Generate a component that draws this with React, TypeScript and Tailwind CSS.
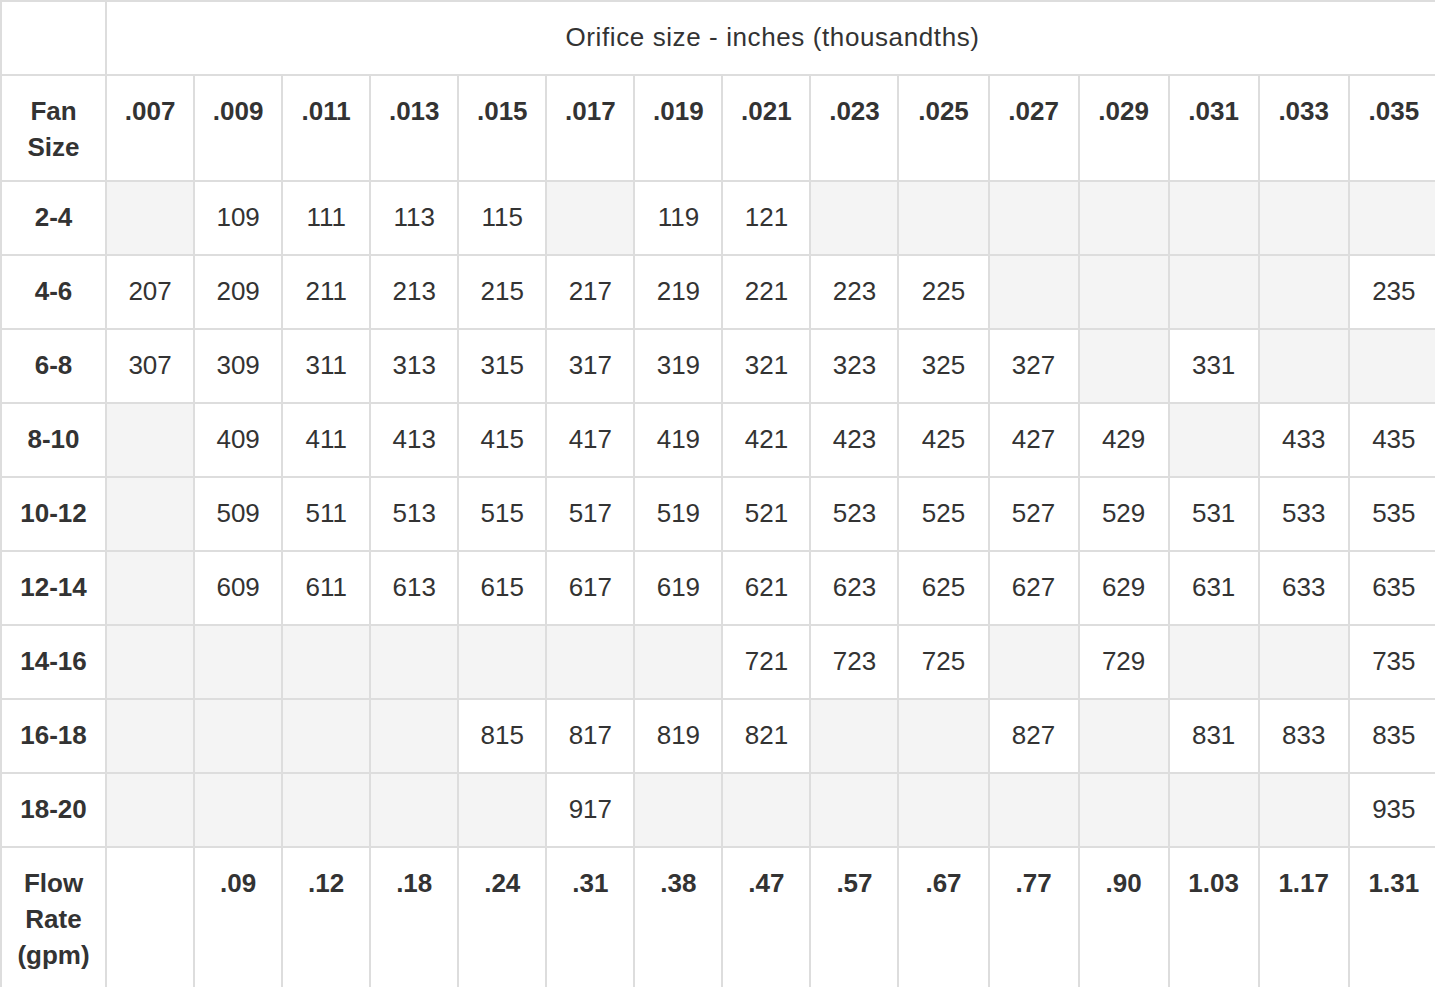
import React from "react";

const sizes = [".007", ".009", ".011", ".013", ".015", ".017", ".019", ".021", ".023", ".025", ".027", ".029", ".031", ".033", ".035"];

const colWidths = [105, 88, 88, 88, 88, 88, 88, 88, 88, 88, 90, 90, 90, 90, 90, 90];

// empty string = no tip for that fan size / orifice
const rows: { label: string; cells: string[] }[] = [
  { label: "2-4", cells: ["", "109", "111", "113", "115", "", "119", "121", "", "", "", "", "", "", ""] },
  { label: "4-6", cells: ["207", "209", "211", "213", "215", "217", "219", "221", "223", "225", "", "", "", "", "235"] },
  { label: "6-8", cells: ["307", "309", "311", "313", "315", "317", "319", "321", "323", "325", "327", "", "331", "", ""] },
  { label: "8-10", cells: ["", "409", "411", "413", "415", "417", "419", "421", "423", "425", "427", "429", "", "433", "435"] },
  { label: "10-12", cells: ["", "509", "511", "513", "515", "517", "519", "521", "523", "525", "527", "529", "531", "533", "535"] },
  { label: "12-14", cells: ["", "609", "611", "613", "615", "617", "619", "621", "623", "625", "627", "629", "631", "633", "635"] },
  { label: "14-16", cells: ["", "", "", "", "", "", "", "721", "723", "725", "", "729", "", "", "735"] },
  { label: "16-18", cells: ["", "", "", "", "815", "817", "819", "821", "", "", "827", "", "831", "833", "835"] },
  { label: "18-20", cells: ["", "", "", "", "", "917", "", "", "", "", "", "", "", "", "935"] },
];

const flowRates = ["", ".09", ".12", ".18", ".24", ".31", ".38", ".47", ".57", ".67", ".77", ".90", "1.03", "1.17", "1.31"];

const cell = "border-2 border-[#dddddd] text-center align-top px-0 pt-[17px]";

const App = () => {
  return (
    <div className="w-full min-h-screen overflow-hidden bg-white">
      <table
        className="table-fixed border-collapse text-[26px] leading-[36px] text-[#333333]"
        style={{ width: 1440, fontFamily: '"Liberation Sans", Arial, Helvetica, sans-serif' }}
      >
        <colgroup>
          {colWidths.map((w, i) => (
            <col key={i} style={{ width: w }} />
          ))}
        </colgroup>
        <tbody>
          <tr>
            <td className={`${cell} pb-[19px]`}></td>
            <td className={`${cell} pb-[19px] tracking-[0.6px]`} colSpan={15}>
              Orifice size - inches (thousandths)
            </td>
          </tr>
          <tr>
            <th className={`${cell} pb-[15px] font-bold`}>
              Fan
              <br />
              Size
            </th>
            {sizes.map((s) => (
              <th key={s} className={`${cell} pb-[15px] font-bold`}>
                {s}
              </th>
            ))}
          </tr>
          {rows.map((row) => (
            <tr key={row.label}>
              <th className={`${cell} pb-[19px] font-bold`}>{row.label}</th>
              {row.cells.map((c, i) => (
                <td key={i} className={`${cell} pb-[19px] ${c ? "bg-white" : "bg-[#f4f4f4]"}`}>
                  {c}
                </td>
              ))}
            </tr>
          ))}
          <tr>
            <th className={`${cell} pb-[19px] font-bold`}>
              Flow
              <br />
              Rate
              <br />
              (gpm)
            </th>
            {flowRates.map((f, i) => (
              <td key={i} className={`${cell} pb-[19px] font-bold`}>
                {f}
              </td>
            ))}
          </tr>
        </tbody>
      </table>
    </div>
  );
};

export default App;
